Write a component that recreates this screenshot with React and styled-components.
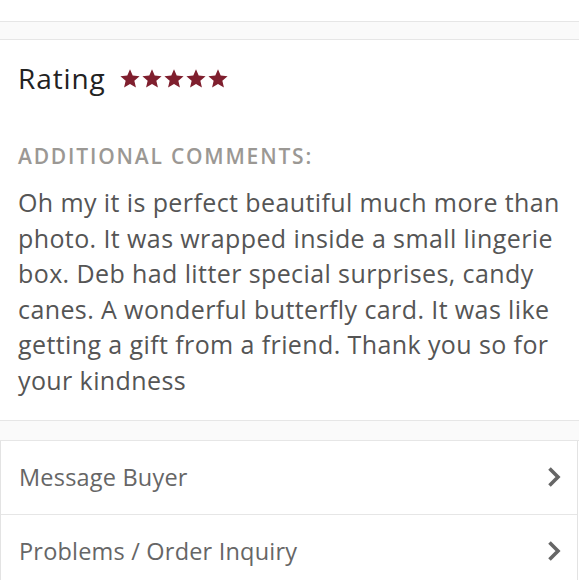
import React from "react";
import styled, { createGlobalStyle } from "styled-components";

const Global = createGlobalStyle`
  html, body { margin: 0; padding: 0; background: #fff; }
  body { font-family: "Open Sans", "Lato", sans-serif; -webkit-font-smoothing: antialiased; }
`;

const Page = styled.div`
  width: 579px;
  height: 580px;
  overflow: hidden;
  background: #fff;
  padding-top: 21px;
  box-sizing: border-box;
`;

const Band = styled.div`
  height: ${(p) => p.$h}px;
  background: #fafafa;
  border-top: 1px solid #e6e6e6;
  border-bottom: 1px solid #e6e6e6;
`;

const Section = styled.section`
  padding: 19px 18px 21px 18px;
  display: flex;
  flex-direction: column;
`;

const RatingRow = styled.div`
  display: flex;
  align-items: center;
  gap: 14px;
  height: 38px;
`;

const RatingTitle = styled.h2`
  margin: 0;
  font-size: 28px;
  line-height: 38px;
  font-weight: 500;
  color: #222;
  letter-spacing: 0.9px;
`;

const Stars = styled.div`
  display: flex;
  gap: 2.2px;
  padding-top: 1px;
`;

const Label = styled.div`
  margin-top: 44px;
  font-size: 21px;
  line-height: 30px;
  font-weight: 600;
  color: #9b9894;
  letter-spacing: 1.8px;
`;

const Comment = styled.p`
  margin: 14px 0 0 0;
  font-size: 25px;
  line-height: 35.6px;
  color: #555;
  letter-spacing: 0.4px;
`;

const List = styled.div`
  border-left: 1px solid #e3e3e3;
  border-right: 1px solid #e3e3e3;
  margin-right: 1px;
`;

const Row = styled.div`
  display: flex;
  align-items: center;
  justify-content: space-between;
  height: 73px;
  padding: 0 16px 0 18px;
  border-bottom: 1px solid #e6e6e6;
  font-size: 23.5px;
  color: #666;
  letter-spacing: 0.2px;
`;

const Star = () => (
  <svg width="20" height="19" viewBox="0.6 0.6 22.8 21.8">
    <path
      d="M12 0.8l3.1 7.3 7.9.7-6 5.2 1.8 7.8L12 17.7l-6.8 4.1 1.8-7.8-6-5.2 7.9-.7z"
      fill="#7f1f2e"
    />
  </svg>
);

const Chevron = () => (
  <svg width="14" height="22" viewBox="0 0 14 22">
    <path d="M2.5 2.5l8.5 8.5-8.5 8.5" fill="none" stroke="#666" strokeWidth="3.6" />
  </svg>
);

export default function App() {
  return (
    <Page>
      <Global />
      <Band $h={17} />
      <Section>
        <RatingRow>
          <RatingTitle>Rating</RatingTitle>
          <Stars>
            {[0, 1, 2, 3, 4].map((i) => (
              <Star key={i} />
            ))}
          </Stars>
        </RatingRow>
        <Label>ADDITIONAL COMMENTS:</Label>
        <Comment>
          Oh my it is perfect beautiful much more than photo. It was wrapped inside a small lingerie
          box. Deb had litter special surprises, candy canes. A wonderful butterfly card. It was like
          getting a gift from a friend. Thank you so for your kindness
        </Comment>
      </Section>
      <Band $h={19} />
      <List>
        <Row>
          Message Buyer
          <Chevron />
        </Row>
        <Row>
          Problems / Order Inquiry
          <Chevron />
        </Row>
      </List>
    </Page>
  );
}
